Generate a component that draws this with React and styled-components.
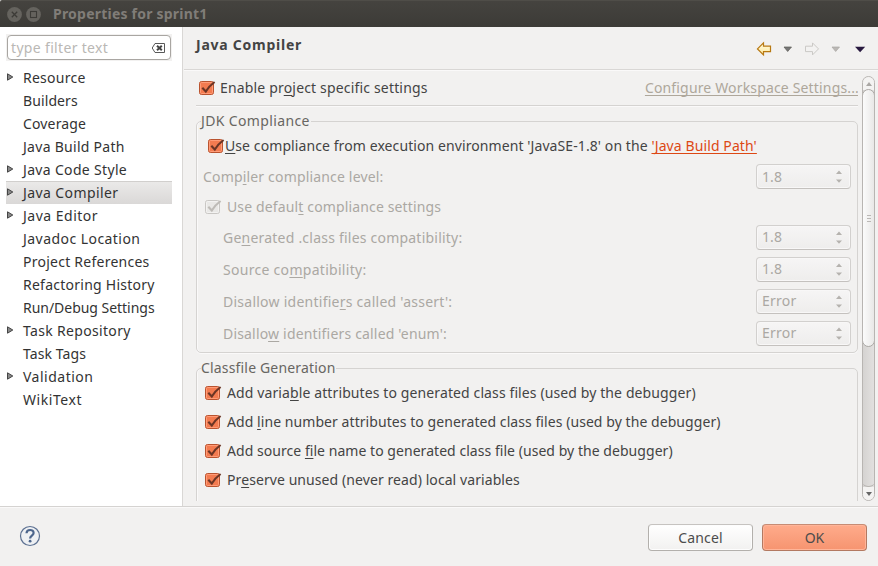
import React from 'react';
import styled, { createGlobalStyle, css } from 'styled-components';

const GlobalStyle = createGlobalStyle`
  * { box-sizing: border-box; }
  body {
    margin: 0;
    overflow: hidden;
    background: #f2f1f0;
    color: #444;
    font: 14px/20px "Noto Sans", "Open Sans", sans-serif;
    white-space: nowrap;
  }
`;

const Dialog = styled.div`
  display: flex;
  flex-direction: column;
  width: 878px;
  height: 566px;
  background: #f2f1f0;
`;

const TitleBar = styled.header`
  display: flex;
  align-items: center;
  gap: 4px;
  height: 27px;
  flex: none;
  padding: 0 7px;
  border-top: 1px solid #4f4d48;
  border-radius: 2px 0 0 0;
  background: linear-gradient(#45433f, #3c3b37);
`;

const WindowTitle = styled.h1`
  margin: 0 0 0 8px;
  font-size: 14px;
  line-height: 20px;
  font-weight: 700;
  letter-spacing: 0.22px;
  color: #807d78;
`;

const Text = styled.span`
  letter-spacing: ${(p) => p.$track || 0}px;
`;

const Mnemonic = styled.span`
  text-decoration: underline;
  text-decoration-thickness: 1px;
  text-underline-offset: 2px;
  text-decoration-skip-ink: none;
`;

const Body = styled.div`
  display: flex;
  flex: none;
  height: 479px;
`;

const Sidebar = styled.nav`
  width: 183px;
  flex: none;
  padding: 7px 0 0 6px;
  background: #fff;
  border-right: 1px solid #d9d7d5;
`;

const FilterFrame = styled.div`
  width: 166px;
  height: 27px;
  padding: 1px;
  background: #f2f1f0;
`;

const FilterBox = styled.div`
  display: flex;
  align-items: center;
  justify-content: space-between;
  height: 25px;
  padding: 0 4px 0 3px;
  border: 1px solid #a9a6a2;
  border-radius: 4px;
  background: #fff;
  color: #bab8b5;
`;

const Tree = styled.ul`
  margin: 5px 0 0;
  padding: 0;
  list-style: none;
`;

const TreeRow = styled.li`
  display: flex;
  align-items: center;
  width: 166px;
  height: 23px;
  color: #333;
  ${(p) =>
    p.$selected &&
    css`
      background: linear-gradient(#ebeae9, #dad8d7);
      box-shadow: inset 0 1px #d1cfcd;
    `}
`;

const Expander = styled.span`
  display: flex;
  width: 17px;
  padding-bottom: 2px;
`;

const Page = styled.main`
  flex: 1;
  min-width: 0;
  display: flex;
  flex-direction: column;
`;

const PageHeader = styled.div`
  display: flex;
  justify-content: space-between;
  height: 43px;
  flex: none;
  margin-left: 1px;
  padding: 8px 12px 0 12px;
  border-bottom: 1px solid #d9d7d5;
  box-shadow: 0 1px #faf9f9;
`;

const PageTitle = styled.h2`
  margin: 0;
  font-size: 14px;
  line-height: 20px;
  letter-spacing: 0.76px;
  color: #444;
`;

const HistoryTools = styled.svg`
  margin-top: 6px;
`;

const ScrollPane = styled.div`
  display: flex;
  gap: 4px;
  margin: 6px 3px 0 13px;
  height: 425px;
`;

const Content = styled.div`
  width: 662px;
  overflow: hidden;
`;

const SettingsHead = styled.div`
  display: flex;
  align-items: center;
  justify-content: space-between;
  height: 30px;
  padding: 0 0 6px 3px;
  border-bottom: 1px solid #d5d3d1;
  box-shadow: 0 1px #faf9f9;
`;

const CheckLabel = styled.label`
  display: flex;
  align-items: center;
  gap: ${(p) => p.$gap ?? 4}px;
  color: ${(p) => (p.$disabled ? '#aba8a3' : '#444')};
`;

const Link = styled.a`
  letter-spacing: ${(p) => p.$track}px;
  color: ${(p) => (p.$muted ? '#aea79b' : '#dd4814')};
  text-decoration: underline;
  text-decoration-thickness: 1px;
  text-underline-offset: 2px;
  text-decoration-skip-ink: none;
  margin-right: ${(p) => (p.$muted ? -1 : 0)}px;
`;

const Group = styled.fieldset`
  min-width: 0;
  width: 662px;
  height: ${(p) => p.$height}px;
  margin: ${(p) => p.$top}px 0 0;
  padding: 0 6px 0 ${(p) => p.$indent}px;
  border: 1px solid #d5d3d1;
  border-radius: 5px;
  box-shadow: inset 1px 0 #faf9f9, 0 1px #faf9f9;
`;

const Legend = styled.legend`
  height: 20px;
  margin-left: ${(p) => p.$shift}px;
  padding: 0 1px 0 0;
  background: #f2f1f0;
  color: #686662;
`;

const Option = styled.div`
  display: flex;
  align-items: center;
  justify-content: space-between;
  height: ${(p) => p.$height}px;
  padding-left: ${(p) => p.$indent || 0}px;
  color: ${(p) => (p.$disabled ? '#aba8a3' : '#444')};
`;

const Combo = styled.div`
  display: flex;
  align-items: center;
  justify-content: space-between;
  width: 95px;
  height: 25px;
  margin-bottom: ${(p) => p.$lift}px;
  padding: 0 8px 0 5px;
  border: 1px solid #d2d0ce;
  border-bottom-color: #c4c1be;
  border-radius: 4px;
  background: linear-gradient(#f6f5f5, #eeedec);
  box-shadow: inset 0 0 0 1px #f8f7f7;
  color: #aba8a3;
`;

const ScrollTrack = styled.div`
  display: flex;
  flex-direction: column;
  width: 13px;
  height: 425px;
  border: 1px solid #b8b5b2;
  border-radius: 7px;
  background: linear-gradient(90deg, #d5d3d1, #e2e0df);
  overflow: hidden;
`;

const ScrollButton = styled.div`
  display: flex;
  align-items: center;
  justify-content: center;
  height: 13px;
  flex: none;
  background: #f4f3f2;
`;

const ScrollThumb = styled.div`
  display: flex;
  flex-direction: column;
  align-items: center;
  justify-content: center;
  gap: 2px;
  height: 258px;
  margin: -1px -1px 0;
  border: 1px solid #aaa7a4;
  border-radius: 7px;
  background: linear-gradient(90deg, #fbfbfb, #e9e8e7);
`;

const Grip = styled.i`
  width: 4px;
  height: 1px;
  background: #bbb8b5;
`;

const TrackRest = styled.div`
  flex: 1;
  margin: 0 -1px;
  border-bottom: 1px solid #b8b5b2;
  border-radius: 0 0 6px 6px;
`;

const Footer = styled.footer`
  display: flex;
  flex: 1;
  align-items: center;
  gap: 9px;
  padding: 2px 11px 0 19px;
  border-top: 1px solid #d5d3d1;
  box-shadow: inset 0 1px #faf9f9;
`;

const HelpIcon = styled.svg`
  margin-bottom: 3px;
`;

const Button = styled.button`
  width: 105px;
  height: 27px;
  padding: 0;
  border: 1px solid ${(p) => (p.$primary ? '#b37961' : '#b3b0ac')};
  border-top-color: ${(p) => (p.$primary ? '#c78c74' : '#c6c3c0')};
  border-radius: 4px;
  background: ${(p) => (p.$primary ? 'linear-gradient(#ffab8b, #f69470)' : 'linear-gradient(#fff, #f2f1f0)')};
  box-shadow: inset 0 0 0 1px ${(p) => (p.$primary ? '#ffb599' : '#fdfdfd')};
  color: #4c4c4c;
  font: inherit;
  letter-spacing: ${(p) => p.$track}px;
`;

const Spacer = styled.div`
  flex: 1;
`;

function WindowButton({ kind }) {
  return (
    <svg width="15" height="15" viewBox="0 0 15 15">
      <circle cx="7.5" cy="7.5" r="7.4" fill="#65635e" />
      {kind === 'close' ? (
        <path d="M4.8 4.8l5.4 5.4M10.2 4.8l-5.4 5.4" stroke="#3c3b37" strokeWidth="1.3" />
      ) : (
        <rect x="4.5" y="4.5" width="6" height="6" fill="none" stroke="#3c3b37" strokeWidth="1.1" />
      )}
    </svg>
  );
}

function Check({ disabled }) {
  const edge = disabled ? '#c9c7c4' : '#b9532f';
  const fill = disabled ? '#e9e8e6' : '#f37b50';
  const glow = disabled ? '#f3f2f1' : '#ff9c78';
  const tick = disabled ? '#bebbb7' : '#6b3525';
  return (
    <svg width="17" height="16" viewBox="0 0 17 16">
      <rect x=".5" y="1.5" width="14" height="13" rx="2" fill={fill} stroke={edge} />
      <rect x="1.5" y="2.5" width="12" height="11" rx="1" fill="none" stroke={glow} />
      <path d="M3.3 7.7l3.5 3.8C9 7.8 11.5 5 15.6 2" fill="none" stroke={tick} strokeWidth="2.1" />
    </svg>
  );
}

function ClearIcon() {
  return (
    <svg width="15" height="12" viewBox="0 0 15 12">
      <path d="M4 1.5h9.5v9H4L1.2 6z" fill="#fff" stroke="#595959" />
      <path d="M6 3.8l4.8 4.4M10.8 3.8L6 8.2" stroke="#454545" strokeWidth="2" />
    </svg>
  );
}

function Spin() {
  return (
    <svg width="6" height="13" viewBox="0 0 6 13">
      <path d="M0 4l3-3.5L6 4zM0 9.5h6L3 12.8z" fill="#b5b2ae" />
    </svg>
  );
}

function ArrowTools() {
  const left = 'M1 7l6-6v3.3h7v5.4H7V13z';
  return (
    <HistoryTools width="110" height="16" viewBox="0 0 110 16">
      <defs>
        <linearGradient id="gold" x1="0" y1="0" x2="0" y2="1">
          <stop offset="0" stopColor="#fffbe0" />
          <stop offset="1" stopColor="#ffe99c" />
        </linearGradient>
      </defs>
      <path d={left} transform="translate(.5 .9)" fill="url(#gold)" stroke="#b87912" strokeWidth="1.2" />
      <path d="M28 6h7.5L31.7 10.5z" fill="#777" stroke="#5d5b58" strokeWidth=".7" />
      <path d={left} transform="translate(63.5 .9) scale(-1 1)" fill="#f3f2f1" stroke="#cbc9c6" />
      <path d="M76 6H83.5L79.7 10.5z" fill="#bbb8b5" stroke="#aaa7a3" strokeWidth=".7" />
      <path d="M99 5.7h10.2l-5.1 5.5z" fill="#28193f" />
    </HistoryTools>
  );
}

const treeItems = [
  ['Resource', 0.25, true],
  ['Builders', 0.1],
  ['Coverage', 0.15],
  ['Java Build Path', 0.28],
  ['Java Code Style', 0.33, true],
  ['Java Compiler', 0.4, true],
  ['Java Editor', 0.5, true],
  ['Javadoc Location', 0.45],
  ['Project References', 0.25],
  ['Refactoring History', 0.25],
  ['Run/Debug Settings', -0.03],
  ['Task Repository', 0.33, true],
  ['Task Tags', 0.1],
  ['Validation', 0.5, true],
  ['WikiText', 0.55],
];

const levels = [
  ['Ge', 'n', 'erated .class files compatibility:', 0.22, '1.8'],
  ['Source co', 'm', 'patibility:', 0.29, '1.8'],
  ['Disallow identifie', 'r', "s called 'assert':", 0.25, 'Error'],
  ['Disallo', 'w', " identifiers called 'enum':", 0.18, 'Error'],
];

const classOptions = [
  ['Add varia', 'b', 'le attributes to generated class files (used by the debugger)', 0.11],
  ['Add ', 'l', 'ine number attributes to generated class files (used by the debugger)', 0.065],
  ['Add source ', 'fi', 'le name to generated class file (used by the debugger)', 0.045],
  ['Pr', 'e', 'serve unused (never read) local variables', 0.08],
];

function Caption({ parts, track }) {
  return (
    <Text $track={track}>
      {parts[0]}
      <Mnemonic>{parts[1]}</Mnemonic>
      {parts[2]}
    </Text>
  );
}

function Select({ value, lift = 0 }) {
  return (
    <Combo $lift={lift}>
      <Text $track={value === 'Error' ? 0.25 : 0.1}>{value}</Text>
      <Spin />
    </Combo>
  );
}

export default function App() {
  return (
    <Dialog>
      <GlobalStyle />
      <TitleBar>
        <WindowButton kind="close" />
        <WindowButton kind="maximize" />
        <WindowTitle>Properties for sprint1</WindowTitle>
      </TitleBar>
      <Body>
        <Sidebar>
          <FilterFrame>
            <FilterBox>
              <Text $track={0.33}>type filter text</Text>
              <ClearIcon />
            </FilterBox>
          </FilterFrame>
          <Tree>
            {treeItems.map(([name, track, branch]) => (
              <TreeRow key={name} $selected={name === 'Java Compiler'}>
                <Expander>
                  {branch && (
                    <svg width="8" height="8" viewBox="0 0 8 8">
                      <path d="M1.5 .8L6.8 4 1.5 7.2z" fill="#8a8a8a" stroke="#454545" />
                    </svg>
                  )}
                </Expander>
                <Text $track={track}>{name}</Text>
              </TreeRow>
            ))}
          </Tree>
        </Sidebar>
        <Page>
          <PageHeader>
            <PageTitle>Java Compiler</PageTitle>
            <ArrowTools />
          </PageHeader>
          <ScrollPane>
            <Content>
              <SettingsHead>
                <CheckLabel>
                  <Check />
                  <Caption parts={['Enable pr', 'o', 'ject specific settings']} track={0.17} />
                </CheckLabel>
                <Link $muted $track={0.16}>Configure Workspace Settings...</Link>
              </SettingsHead>
              <Group $top={5} $height={242} $indent={6}>
                <Legend $shift={-2}>
                  <Text $track={0.36}>JDK Compliance</Text>
                </Legend>
                <Option $height={30} $indent={5}>
                  <CheckLabel $gap={0}>
                    <Check />
                    <Text $track={0.09}>
                      <Mnemonic>U</Mnemonic>se compliance from execution environment 'JavaSE-1.8' on the{' '}
                      <Link $track={0.1}>'Java Build Path'</Link>
                    </Text>
                  </CheckLabel>
                </Option>
                <Option $height={31} $disabled>
                  <Caption parts={['Comp', 'i', 'ler compliance level:']} track={0.17} />
                  <Select value="1.8" />
                </Option>
                <Option $height={30} $indent={2}>
                  <CheckLabel $disabled $gap={5}>
                    <Check disabled />
                    <Caption parts={['Use defaul', 't', ' compliance settings']} track={0.14} />
                  </CheckLabel>
                </Option>
                {levels.map(([a, b, c, track, value]) => (
                  <Option key={a} $height={32} $indent={20} $disabled>
                    <Caption parts={[a, b, c]} track={track} />
                    <Select value={value} lift={2} />
                  </Option>
                ))}
              </Group>
              <Group $top={5} $height={160} $indent={8}>
                <Legend $shift={-4}>
                  <Text $track={0.17}>Classfile Generation</Text>
                </Legend>
                {classOptions.map(([a, b, c, track]) => (
                  <Option key={a} $height={29}>
                    <CheckLabel $gap={5}>
                      <Check />
                      <Caption parts={[a, b, c]} track={track} />
                    </CheckLabel>
                  </Option>
                ))}
              </Group>
            </Content>
            <ScrollTrack>
              <ScrollButton>
                <svg width="6" height="4" viewBox="0 0 6 4">
                  <path d="M0 4l3-4 3 4z" fill="#aaa7a4" />
                </svg>
              </ScrollButton>
              <ScrollThumb>
                <Grip />
                <Grip />
                <Grip />
              </ScrollThumb>
              <TrackRest />
              <ScrollButton>
                <svg width="6" height="4" viewBox="0 0 6 4">
                  <path d="M0 0h6L3 4z" fill="#666" />
                </svg>
              </ScrollButton>
            </ScrollTrack>
          </ScrollPane>
        </Page>
      </Body>
      <Footer>
        <HelpIcon width="22" height="22" viewBox="0 0 22 22">
          <circle cx="11" cy="11" r="9.5" fill="#eef0f3" stroke="#5d7192" strokeWidth="1.2" />
          <path d="M7.5 8.2C7.7 3.9 14.6 4 14.6 8c0 2.7-3.5 2.7-3.5 5.5" fill="none" stroke="#4c658c" strokeWidth="2.2" />
          <circle cx="11.1" cy="16.2" r="1.4" fill="#4c658c" />
        </HelpIcon>
        <Spacer />
        <Button $track={0.15}>Cancel</Button>
        <Button $primary $track={0}>OK</Button>
      </Footer>
    </Dialog>
  );
}
